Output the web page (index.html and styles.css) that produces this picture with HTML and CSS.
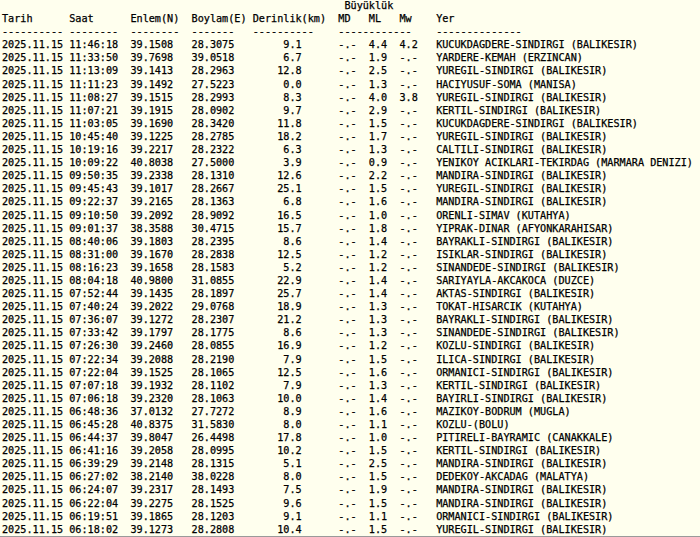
FILE: index.html
```html
<!DOCTYPE html>
<html lang="tr">
<head>
<meta charset="utf-8">
<title>Son Depremler</title>
<link rel="stylesheet" href="styles.css">
</head>
<body>
<main class="page">
<pre class="list">                                                        Büyüklük
Tarih      Saat      Enlem(N)  Boylam(E) Derinlik(km)  MD   ML   Mw    Yer
---------- --------  --------  -------   ----------    ------------    --------------
2025.11.15 11:46:18  39.1508   28.3075        9.1      -.-  4.4  4.2   KUCUKDAGDERE-SINDIRGI (BALIKESIR)
2025.11.15 11:33:50  39.7698   39.0518        6.7      -.-  1.9  -.-   YARDERE-KEMAH (ERZINCAN)
2025.11.15 11:13:09  39.1413   28.2963       12.8      -.-  2.5  -.-   YUREGIL-SINDIRGI (BALIKESIR)
2025.11.15 11:11:23  39.1492   27.5223        0.0      -.-  1.3  -.-   HACIYUSUF-SOMA (MANISA)
2025.11.15 11:08:27  39.1515   28.2993        8.3      -.-  4.0  3.8   YUREGIL-SINDIRGI (BALIKESIR)
2025.11.15 11:07:21  39.1915   28.0902        9.7      -.-  2.9  -.-   KERTIL-SINDIRGI (BALIKESIR)
2025.11.15 11:03:05  39.1690   28.3420       11.8      -.-  1.5  -.-   KUCUKDAGDERE-SINDIRGI (BALIKESIR)
2025.11.15 10:45:40  39.1225   28.2785       18.2      -.-  1.7  -.-   YUREGIL-SINDIRGI (BALIKESIR)
2025.11.15 10:19:16  39.2217   28.2322        6.3      -.-  1.3  -.-   CALTILI-SINDIRGI (BALIKESIR)
2025.11.15 10:09:22  40.8038   27.5000        3.9      -.-  0.9  -.-   YENIKOY ACIKLARI-TEKIRDAG (MARMARA DENIZI)
2025.11.15 09:50:35  39.2338   28.1310       12.6      -.-  2.2  -.-   MANDIRA-SINDIRGI (BALIKESIR)
2025.11.15 09:45:43  39.1017   28.2667       25.1      -.-  1.5  -.-   YUREGIL-SINDIRGI (BALIKESIR)
2025.11.15 09:22:37  39.2165   28.1363        6.8      -.-  1.6  -.-   MANDIRA-SINDIRGI (BALIKESIR)
2025.11.15 09:10:50  39.2092   28.9092       16.5      -.-  1.0  -.-   ORENLI-SIMAV (KUTAHYA)
2025.11.15 09:01:37  38.3588   30.4715       15.7      -.-  1.8  -.-   YIPRAK-DINAR (AFYONKARAHISAR)
2025.11.15 08:40:06  39.1803   28.2395        8.6      -.-  1.4  -.-   BAYRAKLI-SINDIRGI (BALIKESIR)
2025.11.15 08:31:00  39.1670   28.2838       12.5      -.-  1.2  -.-   ISIKLAR-SINDIRGI (BALIKESIR)
2025.11.15 08:16:23  39.1658   28.1583        5.2      -.-  1.2  -.-   SINANDEDE-SINDIRGI (BALIKESIR)
2025.11.15 08:04:18  40.9800   31.0855       22.9      -.-  1.4  -.-   SARIYAYLA-AKCAKOCA (DUZCE)
2025.11.15 07:52:44  39.1435   28.1897       25.7      -.-  1.4  -.-   AKTAS-SINDIRGI (BALIKESIR)
2025.11.15 07:40:24  39.2022   29.0768       18.9      -.-  1.3  -.-   TOKAT-HISARCIK (KUTAHYA)
2025.11.15 07:36:07  39.1272   28.2307       21.2      -.-  1.3  -.-   BAYRAKLI-SINDIRGI (BALIKESIR)
2025.11.15 07:33:42  39.1797   28.1775        8.6      -.-  1.3  -.-   SINANDEDE-SINDIRGI (BALIKESIR)
2025.11.15 07:26:30  39.2460   28.0855       16.9      -.-  1.2  -.-   KOZLU-SINDIRGI (BALIKESIR)
2025.11.15 07:22:34  39.2088   28.2190        7.9      -.-  1.5  -.-   ILICA-SINDIRGI (BALIKESIR)
2025.11.15 07:22:04  39.1525   28.1065       12.5      -.-  1.6  -.-   ORMANICI-SINDIRGI (BALIKESIR)
2025.11.15 07:07:18  39.1932   28.1102        7.9      -.-  1.3  -.-   KERTIL-SINDIRGI (BALIKESIR)
2025.11.15 07:06:18  39.2320   28.1063       10.0      -.-  1.4  -.-   BAYIRLI-SINDIRGI (BALIKESIR)
2025.11.15 06:48:36  37.0132   27.7272        8.9      -.-  1.6  -.-   MAZIKOY-BODRUM (MUGLA)
2025.11.15 06:45:28  40.8375   31.5830        8.0      -.-  1.1  -.-   KOZLU-(BOLU)
2025.11.15 06:44:37  39.8047   26.4498       17.8      -.-  1.0  -.-   PITIRELI-BAYRAMIC (CANAKKALE)
2025.11.15 06:41:16  39.2058   28.0995       10.2      -.-  1.5  -.-   KERTIL-SINDIRGI (BALIKESIR)
2025.11.15 06:39:29  39.2148   28.1315        5.1      -.-  2.5  -.-   MANDIRA-SINDIRGI (BALIKESIR)
2025.11.15 06:27:02  38.2140   38.0228        8.0      -.-  1.5  -.-   DEDEKOY-AKCADAG (MALATYA)
2025.11.15 06:24:07  39.2317   28.1493        7.5      -.-  1.9  -.-   MANDIRA-SINDIRGI (BALIKESIR)
2025.11.15 06:22:04  39.2275   28.1525        9.6      -.-  1.5  -.-   MANDIRA-SINDIRGI (BALIKESIR)
2025.11.15 06:19:51  39.1865   28.1203        9.1      -.-  1.1  -.-   ORMANICI-SINDIRGI (BALIKESIR)
2025.11.15 06:18:02  39.1273   28.2808       10.4      -.-  1.5  -.-   YUREGIL-SINDIRGI (BALIKESIR)</pre>
</main>
</body>
</html>
```

FILE: styles.css
```css
html,
body {
  margin: 0;
  padding: 0;
  background: #ffffee;
}

.page {
  box-sizing: border-box;
  height: 537px;
  overflow: hidden;
  border-bottom: 1px solid #9a9a9a;
  padding-left: 2px;
}

.list {
  margin: -1px 0 0;
  font-family: "DejaVu Sans Mono", monospace;
  font-size: 10.17px;
  line-height: 13.1px;
  font-weight: 400;
  -webkit-text-stroke: 0.25px #000;
  color: #000;
}
```
